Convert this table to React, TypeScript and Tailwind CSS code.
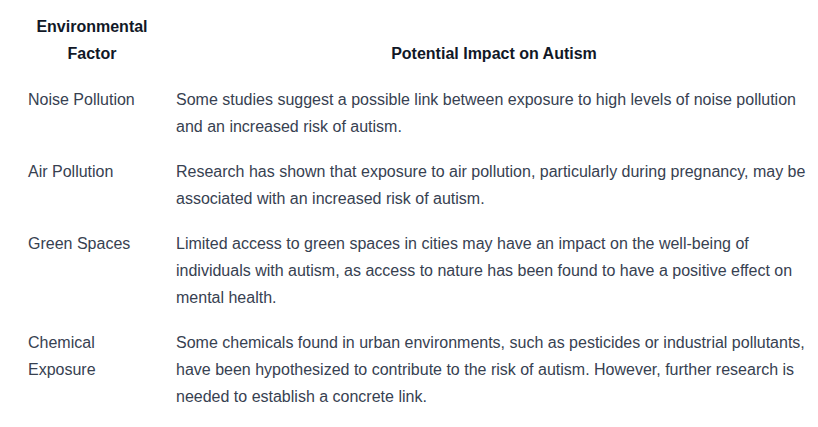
const rows = [
  {
    factor: "Noise Pollution",
    impact:
      "Some studies suggest a possible link between exposure to high levels of noise pollution and an increased risk of autism.",
  },
  {
    factor: "Air Pollution",
    impact:
      "Research has shown that exposure to air pollution, particularly during pregnancy, may be associated with an increased risk of autism.",
  },
  {
    factor: "Green Spaces",
    impact:
      "Limited access to green spaces in cities may have an impact on the well-being of individuals with autism, as access to nature has been found to have a positive effect on mental health.",
  },
  {
    factor: "Chemical Exposure",
    impact:
      "Some chemicals found in urban environments, such as pesticides or industrial pollutants, have been hypothesized to contribute to the risk of autism. However, further research is needed to establish a concrete link.",
  },
];

export default function App() {
  return (
    <div className="min-h-screen w-full overflow-hidden bg-white font-['Liberation_Sans',Arial,sans-serif] text-[16px] leading-[27px] text-[#374151]">
      <table className="ml-[18px] w-[800px] table-fixed border-collapse">
        <colgroup>
          <col className="w-[148px]" />
          <col className="w-[652px]" />
        </colgroup>
        <thead>
          <tr>
            <th className="pl-[10px] pr-[10px] pt-[13px] pb-[10px] text-center align-bottom font-bold text-[#111827]">
              Environmental Factor
            </th>
            <th className="pl-[10px] pr-[6px] pt-[13px] pb-[10px] text-center align-bottom font-bold text-[#111827]">
              Potential Impact on Autism
            </th>
          </tr>
        </thead>
        <tbody>
          {rows.map((r) => (
            <tr key={r.factor}>
              <td className="pl-[10px] pr-[10px] py-[9px] align-top">{r.factor}</td>
              <td className="pl-[10px] pr-[6px] py-[9px] align-top">{r.impact}</td>
            </tr>
          ))}
        </tbody>
      </table>
    </div>
  );
}
